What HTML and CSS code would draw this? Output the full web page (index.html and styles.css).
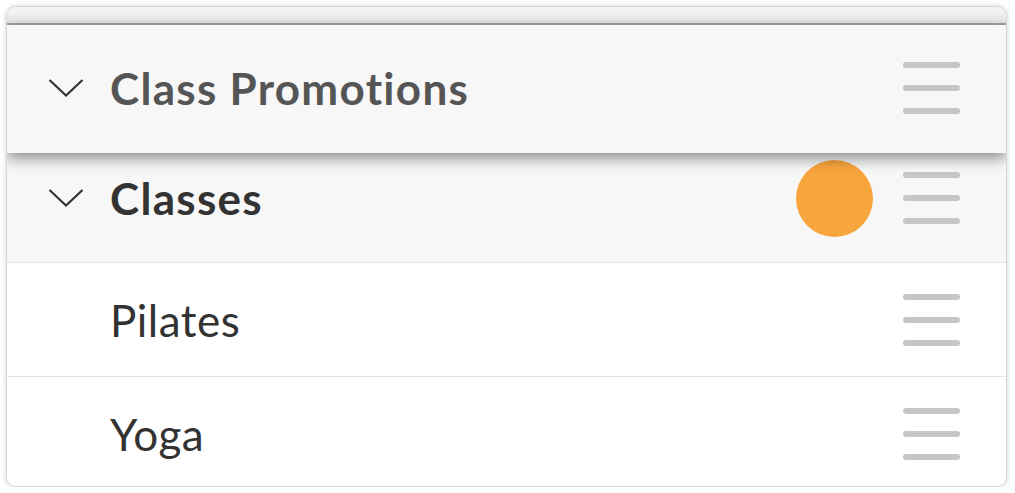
FILE: index.html
```html
<!DOCTYPE html>
<html>
<head>
<meta charset="utf-8">
<link rel="stylesheet" href="styles.css">
</head>
<body>
<div class="card">
  <div class="topbar"></div>
  <div class="row dragged">
    <svg class="chev" viewBox="0 0 36 20" width="36" height="20"><path d="M1.5 2 L18 17.5 L34.5 2" fill="none" stroke="#333" stroke-width="2.2"/></svg>
    <span class="label bold muted">Class Promotions</span>
    <span class="handle"><i></i><i></i><i></i></span>
  </div>
  <div class="row group">
    <svg class="chev" viewBox="0 0 36 20" width="36" height="20"><path d="M1.5 2 L18 17.5 L34.5 2" fill="none" stroke="#333" stroke-width="2.2"/></svg>
    <span class="label bold">Classes</span>
    <span class="dot"></span>
    <span class="handle"><i></i><i></i><i></i></span>
  </div>
  <div class="row item">
    <span class="label">Pilates</span>
    <span class="handle"><i></i><i></i><i></i></span>
  </div>
  <div class="row item last">
    <span class="label">Yoga</span>
    <span class="handle"><i></i><i></i><i></i></span>
  </div>
</div>
</body>
</html>
```
FILE: styles.css
```css
html, body {
  margin: 0;
  padding: 0;
  background: #ffffff;
}
body {
  padding: 7px 0 0 7px;
  font-family: "Lato", "Liberation Sans", sans-serif;
}
.card {
  width: 999px;
  height: 479px;
  border: 1px solid #d6d6d6;
  border-radius: 10px;
  box-shadow: 0 0 5px rgba(0,0,0,0.18);
  background: #ffffff;
  overflow: hidden;
  display: flex;
  flex-direction: column;
  box-sizing: content-box;
  margin-left: -1px;
  margin-top: -1px;
}
.topbar {
  height: 16px;
  flex: none;
  background: linear-gradient(#f6f6f6, #e7e7e7);
  border-bottom: 2px solid #a4a4a4;
}
.row {
  flex: none;
  display: flex;
  align-items: center;
  box-sizing: border-box;
  padding-left: 103px;
  padding-right: 46px;
}
.row .chev {
  margin-left: -62px;
  margin-right: 26px;
  flex: none;
}
.label {
  flex: 1;
  font-size: 44px;
  color: #333333;
  letter-spacing: 0.5px;
}
.bold {
  font-weight: 700;
  letter-spacing: 1.3px;
}
.muted {
  color: #555555;
}
.dragged {
  height: 128px;
  background: #f7f7f7;
  position: relative;
  z-index: 2;
  box-shadow: 0 5px 14px rgba(0,0,0,0.45);
  padding-bottom: 3px;
}
.group {
  height: 110px;
  background: #f7f7f7;
  border-bottom: 1px solid #e4e4e4;
  padding-bottom: 19px;
}
.item {
  height: 114px;
  background: #ffffff;
  border-bottom: 1px solid #e4e4e4;
  padding-top: 0px;
}
.item.last {
  border-bottom: none;
}
.dot {
  width: 77px;
  height: 77px;
  border-radius: 50%;
  background: #f9a53e;
  margin-right: 30px;
  flex: none;
}
.handle {
  display: flex;
  flex-direction: column;
  gap: 17px;
  width: 57px;
  flex: none;
}
.handle i {
  display: block;
  height: 6px;
  border-radius: 3px;
  background: #c6c6c6;
}
```
